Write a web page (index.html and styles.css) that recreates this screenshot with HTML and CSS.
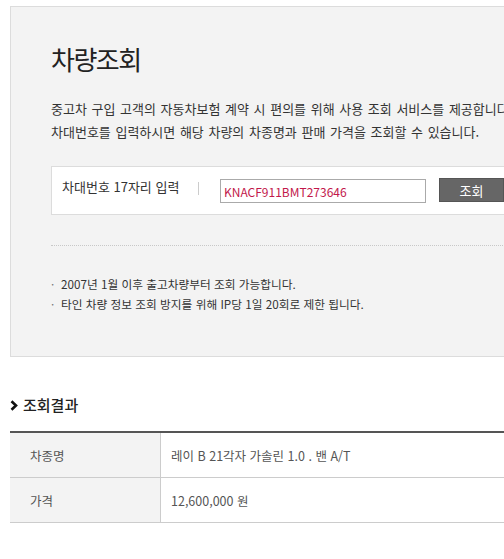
FILE: index.html
```html
<!DOCTYPE html>
<html lang="ko">
<head>
<meta charset="utf-8">
<title>차량조회</title>
<link rel="stylesheet" href="styles.css">
</head>
<body>
<div class="page">
  <section class="lookup">
    <h1 class="lookup-title">차량조회</h1>
    <p class="lookup-desc">중고차 구입 고객의 자동차보험 계약 시 편의를 위해 사용 조회 서비스를 제공합니다.<br>차대번호를 입력하시면 해당 차량의 차종명과 판매 가격을 조회할 수 있습니다.</p>
    <div class="search">
      <span class="search-label">차대번호 17자리 입력</span>
      <span class="search-sep"></span>
      <input class="search-input" type="text" value="KNACF911BMT273646">
      <button class="search-btn" type="button">조회</button>
    </div>
    <div class="divider"></div>
    <ul class="notes">
      <li class="note"><span class="note-dot">·</span>2007년 1월 이후 출고차량부터 조회 가능합니다.</li>
      <li class="note"><span class="note-dot">·</span>타인 차량 정보 조회 방지를 위해 IP당 1일 20회로 제한 됩니다.</li>
    </ul>
  </section>

  <h2 class="result-title">
    <svg class="chev" width="8" height="11" viewBox="0 0 8 11"><polyline points="1.5,1.2 6,5.5 1.5,9.8" fill="none" stroke="#111" stroke-width="2.6"/></svg>
    조회결과
  </h2>
  <table class="result">
    <tr>
      <th class="result-th">차종명</th>
      <td class="result-td">레이 B 21각자 가솔린 1.0 . 밴 A/T</td>
    </tr>
    <tr>
      <th class="result-th">가격</th>
      <td class="result-td">12,600,000 원</td>
    </tr>
  </table>
</div>
</body>
</html>
```

FILE: styles.css
```css
html, body {
  margin: 0;
  padding: 0;
  overflow: hidden;
  background: #fff;
}
body {
  font-family: "Noto Sans CJK KR", "Noto Sans", sans-serif;
  color: #333;
}
.page {
  width: 1000px;
  margin: 6px 0 0 10px;
}
.lookup {
  background: #f3f3f3;
  border: 1px solid #dcdcdc;
  padding: 34px 40px 42px 40px;
}
.lookup-title {
  margin: 0;
  font-size: 26px;
  line-height: 36px;
  font-weight: 400;
  letter-spacing: -1.5px;
  color: #222;
}
.lookup-desc {
  margin: 20px 0 0;
  font-size: 13px;
  line-height: 23px;
  word-spacing: 1px;
  color: #333;
}
.search {
  margin-top: 23px;
  height: 37px;
  background: #fff;
  border: 1px solid #dcdcdc;
  padding: 10px 0 0 10px;
  display: flex;
  align-items: flex-start;
}
.search-label {
  width: 136px;
  font-size: 13px;
  line-height: 20px;
  color: #333;
}
.search-sep {
  width: 1px;
  height: 13px;
  margin-top: 5px;
  background: #ccc;
}
.search-input {
  box-sizing: border-box;
  margin: 2px 0 0 21px;
  width: 206px;
  height: 24px;
  border: 1px solid #aaa;
  padding: 0 3px;
  font-family: "Noto Sans CJK KR", sans-serif;
  font-size: 12px;
  color: #c2184b;
  background: #fff;
  outline: none;
}
.search-btn {
  box-sizing: border-box;
  margin: 1px 0 0 13px;
  width: 65px;
  height: 24px;
  background: #666;
  border: 1px solid #555;
  color: #fff;
  font-family: "Noto Sans CJK KR", sans-serif;
  font-size: 13px;
  padding: 0;
}
.divider {
  margin-top: 30px;
  border-top: 1px dotted #c8c8c8;
}
.notes {
  list-style: none;
  margin: 28px 0 0;
  padding: 0;
}
.note {
  font-size: 11.7px;
  line-height: 20px;
  color: #333;
  display: flex;
}
.note-dot {
  width: 10px;
  color: #777;
}
.result-title {
  margin: 37px 0 0;
  display: flex;
  align-items: center;
  gap: 5px;
  font-size: 15px;
  line-height: 22px;
  font-weight: 500;
  color: #222;
}
.chev {
  display: block;
}
.result {
  margin-top: 15px;
  width: 100%;
  border-collapse: collapse;
  border-top: 2px solid #555;
}
.result-th {
  width: 130px;
  height: 44px;
  background: #f3f3f3;
  border-right: 1px solid #ccc;
  border-bottom: 1px solid #ccc;
  padding: 0 0 0 20px;
  text-align: left;
  font-weight: 400;
  font-size: 12.5px;
  color: #555;
}
.result-td {
  height: 44px;
  border-bottom: 1px solid #ccc;
  padding: 0 0 0 10px;
  font-size: 12.5px;
  color: #555;
}
```
